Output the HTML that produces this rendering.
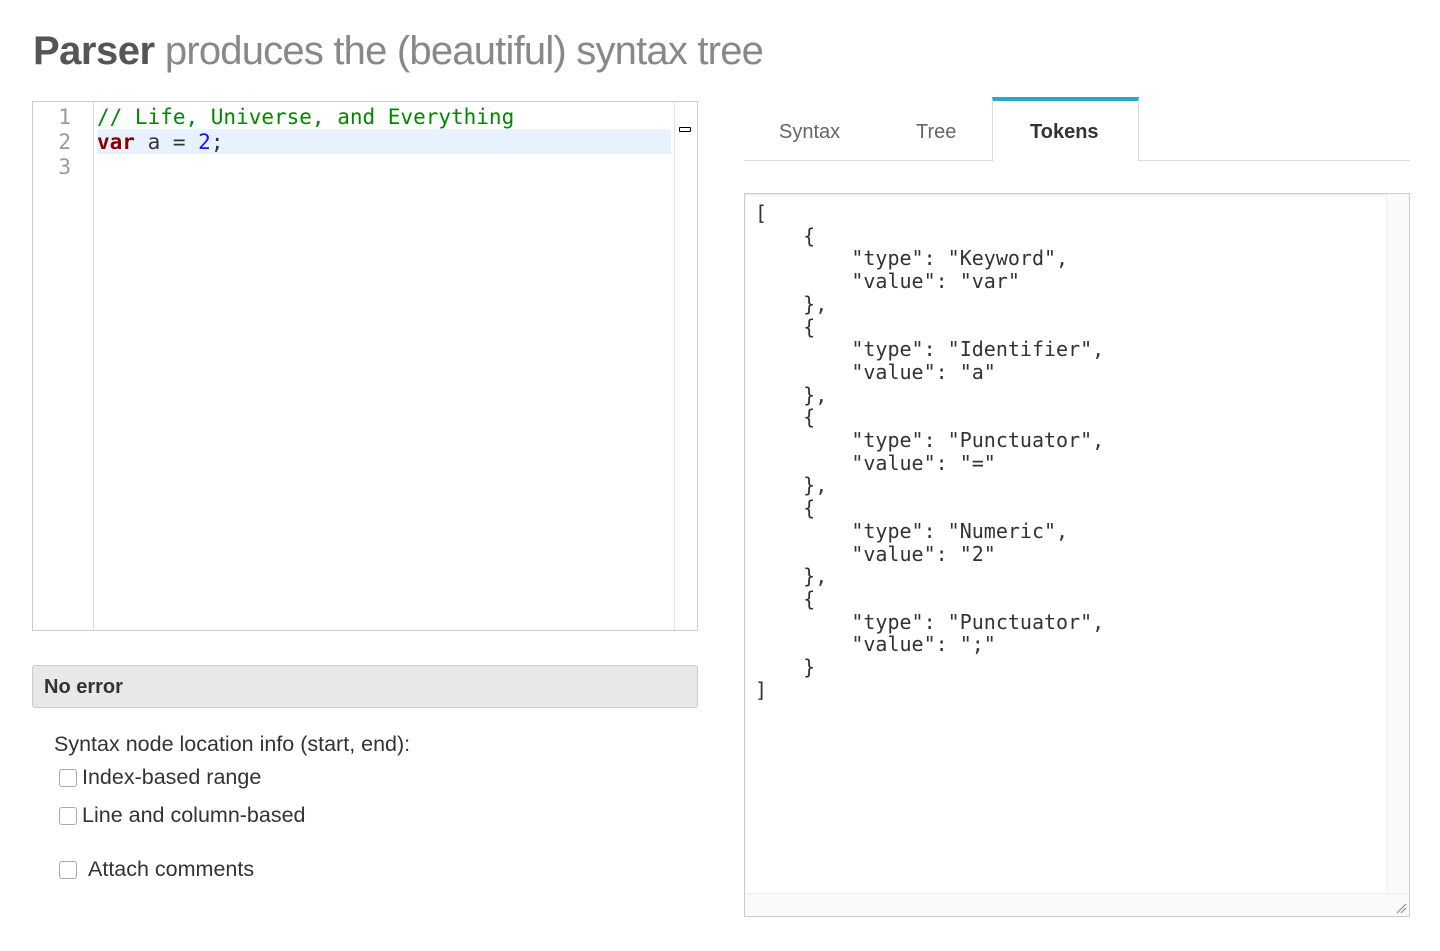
<!DOCTYPE html>
<html><head><meta charset="utf-8"><style>
body{margin:0;width:1440px;height:951px;background:#fff;font-family:"Liberation Sans",sans-serif;position:relative;overflow:hidden}
.abs{position:absolute}
h1{position:absolute;left:33px;top:29px;margin:0;font-size:40px;font-weight:normal;color:#888;letter-spacing:-0.8px;white-space:nowrap}
h1 b{color:#555;letter-spacing:-0.5px}
.ed{left:32px;top:101px;width:664px;height:528px;border:1px solid #ccc;background:#fff}
.gut{left:0;top:0;width:60px;height:100%;border-right:1px solid #ddd;background:#fff}
.ln{position:absolute;left:0;width:38px;text-align:right;color:#999;font:21px/25px "DejaVu Sans Mono",monospace}
.code{position:absolute;left:64px;font:21px/25px "DejaVu Sans Mono",monospace;white-space:pre;color:#333}
.vs{right:0;top:0;width:22px;height:100%;border-left:1px solid #e5e5e5}
.err{left:32px;top:665px;width:666px;height:43px;border:1px solid #ccc;border-radius:3px;background:#e8e8e8;font-weight:bold;font-size:20px;line-height:42px;color:#333;box-sizing:border-box;padding-left:11px}
.lbl{font-size:21.5px;color:#333;white-space:nowrap}
.cb{width:16px;height:16px;border:1px solid #aaa;border-radius:3px;background:#fff}
.tabs{left:744px;top:160px;width:666px;border-top:1px solid #ddd}
.tab{font-size:20px;color:#666}
.out{left:744px;top:193px;width:664px;height:722px;border:1px solid #ccc;box-shadow:inset 0 1px 2px rgba(0,0,0,.1)}
.json{position:absolute;left:10px;top:8px;font:20px/22.7px "DejaVu Sans Mono",monospace;white-space:pre;color:#333;margin:0}
</style></head><body>
<h1><b>Parser</b> produces the (beautiful) syntax tree</h1>
<div class="abs ed">
 <div class="abs gut"></div>
 <div class="abs" style="left:64px;top:27px;width:574px;height:25px;background:#e8f2ff"></div>
 <div class="ln" style="top:3px">1<br>2<br>3</div>
 <div class="code" style="top:3px"><span style="color:#080">// Life, Universe, and Everything</span>
<span style="color:#800;font-weight:bold">var</span> a = <span style="color:#11f">2</span>;</div>
 <div class="abs vs"></div>
 <div class="abs" style="left:646px;top:25px;width:10px;height:3px;border:1px solid #000;border-radius:1px"></div>
</div>
<div class="abs err">No error</div>
<div class="abs lbl" style="left:54px;top:732px">Syntax node location info (start, end):</div>
<div class="abs cb" style="left:59px;top:769px"></div><div class="abs lbl" style="left:82px;top:765px">Index-based range</div>
<div class="abs cb" style="left:59px;top:807px"></div><div class="abs lbl" style="left:82px;top:803px">Line and column-based</div>
<div class="abs cb" style="left:59px;top:861px"></div><div class="abs lbl" style="left:88px;top:857px">Attach comments</div>

<div class="abs tabs"></div>
<div class="abs tab" style="left:779px;top:121px">Syntax</div>
<div class="abs tab" style="left:916px;top:121px">Tree</div>
<div class="abs" style="left:992px;top:97px;width:147px;height:65px;background:#fff;border-left:1px solid #ddd;border-right:1px solid #ddd;border-top:4px solid #2ba6cb;box-sizing:border-box"></div>
<div class="abs tab" style="left:1030px;top:121px;color:#333;font-weight:bold">Tokens</div>

<div class="abs out">
<pre class="json">[
    {
        "type": "Keyword",
        "value": "var"
    },
    {
        "type": "Identifier",
        "value": "a"
    },
    {
        "type": "Punctuator",
        "value": "="
    },
    {
        "type": "Numeric",
        "value": "2"
    },
    {
        "type": "Punctuator",
        "value": ";"
    }
]</pre>
 <div class="abs" style="right:0;top:0;width:22px;height:100%;border-left:1px solid #eee;background:#fafafa"></div>
 <div class="abs" style="left:0;bottom:0;width:100%;height:22px;border-top:1px solid #eee;background:#fafafa"></div>
 <svg class="abs" style="right:2px;bottom:2px" width="12" height="12"><path d="M2 11L11 2M6 11L11 6" stroke="#888" stroke-width="1"/></svg>
</div>
</body></html>
